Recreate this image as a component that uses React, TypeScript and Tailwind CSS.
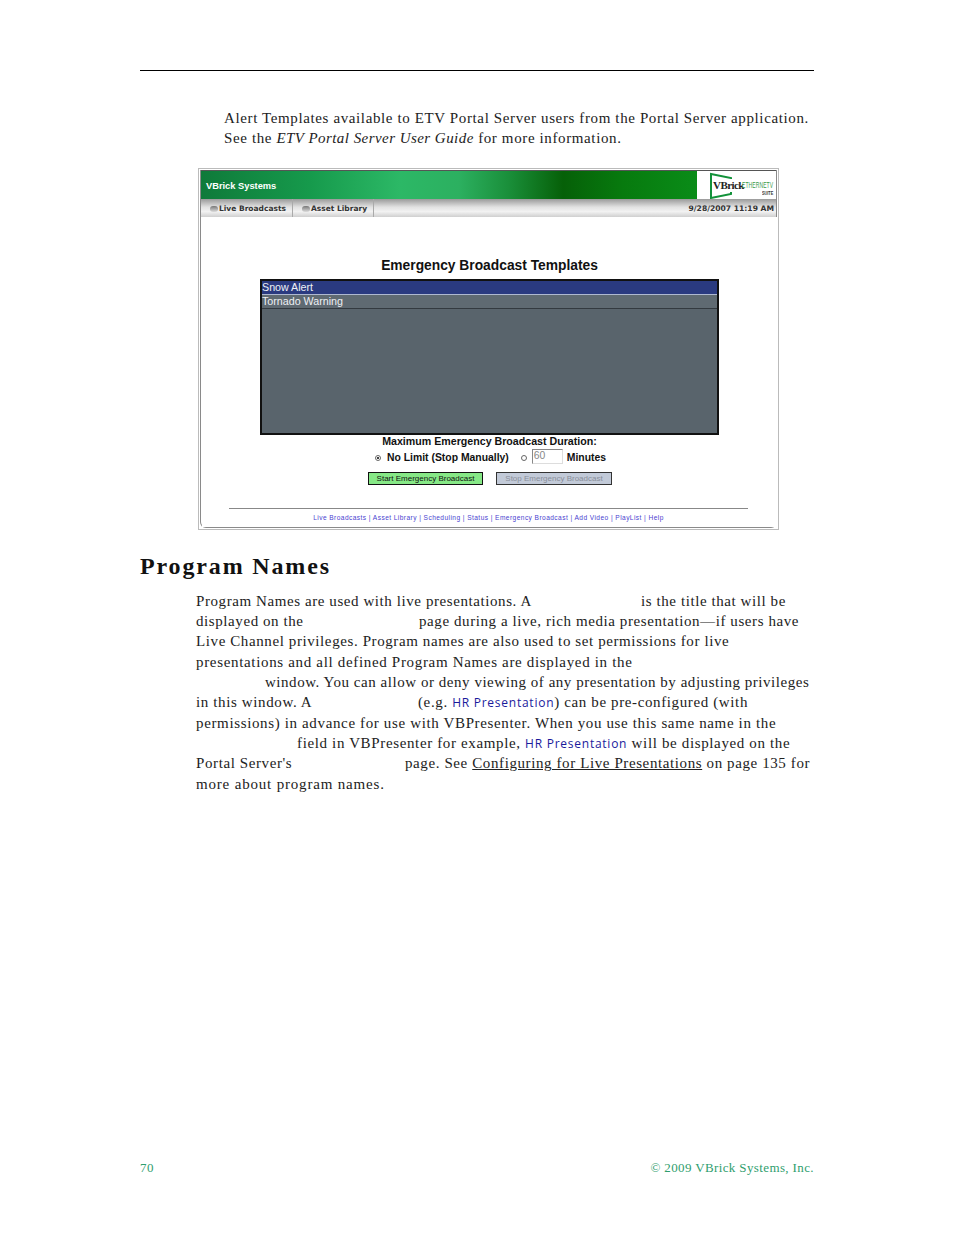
import React from "react";

const L = ({ children, t }: { children: React.ReactNode; t?: string }) => (
  <div className={`h-[20.36px] leading-[20.36px] whitespace-pre ${t ?? ""}`}>{children}</div>
);
const M = ({ children }: { children: React.ReactNode }) => (
  <span className="font-['Open_Sans',sans-serif] text-[12px] text-[#1a1a9c] tracking-[0.75px]">{children}</span>
);

function Logo() {
  return (
    <div className="w-[79px] h-full bg-white relative overflow-hidden">
      <svg className="absolute left-[12px] top-[1px]" width="30" height="28" viewBox="0 0 30 28" fill="none">
        <path d="M22 7 V6 L2 2 V26 L22 22 V20" stroke="#12923a" strokeWidth="2" fill="white" />
      </svg>
      <span className="absolute left-[16px] top-[9px] font-['Liberation_Serif',serif] font-bold text-[11px] leading-[11px] tracking-[-0.55px] text-[#222]">VBrick</span>
      <span className="absolute left-[45px] top-[8px] font-['Liberation_Sans',sans-serif] text-[5px] leading-[6px] tracking-[0.1px] text-[#3a9a4a] scale-y-[1.8] origin-top-left">ETHERNETV</span>
      <span className="absolute left-[65px] top-[19px] font-['Liberation_Sans',sans-serif] font-bold text-[3.8px] leading-[5px] text-[#333] scale-y-[1.6] origin-top-left">SUITE</span>
    </div>
  );
}

function Radio({ on }: { on?: boolean }) {
  return (
    <span className="w-[6px] h-[6px] rounded-full border border-[#666] bg-white flex items-center justify-center shrink-0">
      {on && <span className="w-[2px] h-[2px] rounded-full bg-black" />}
    </span>
  );
}

function Tab({ children, w }: { children: React.ReactNode; w: string }) {
  return (
    <div className={`${w} h-full border-r border-[#aaa] flex items-center pl-[9px] pt-[2px] gap-[1px]`}>
      <span className="w-[8px] h-[6px] rounded-full bg-[linear-gradient(180deg,#777,#ddd)] shrink-0" />
      <span className="font-['DejaVu_Sans',sans-serif] font-bold text-[7.5px] tracking-normal text-[#333] whitespace-nowrap">{children}</span>
    </div>
  );
}

function Shot() {
  const links = ["Live Broadcasts", "Asset Library", "Scheduling", "Status", "Emergency Broadcast", "Add Video", "PlayList", "Help"];
  return (
    <div className="ml-[58px] mt-[19px] w-[581px] h-[362px] border border-[#bbb] p-px font-['Liberation_Sans',sans-serif] tracking-normal">
      <div className="h-full border border-[#8a8a8a] border-t-0 rounded-b-[6px] flex flex-col">
        <div className="h-[29px] flex border-t border-[#555]">
          <div className="flex-1 bg-[linear-gradient(90deg,#0f7a3a_0%,#169a4c_22%,#2cb866_40%,#2cb060_52%,#1a8f3a_62%,#066008_73%,#077a0e_85%,#0a8c18_100%)] text-white text-[9.3px] font-bold pl-[5px] pt-[8px] leading-[14px]">VBrick Systems</div>
          <Logo />
        </div>
        <div className="h-[18px] bg-[linear-gradient(180deg,#9a9a9a_0%,#e2e2e2_45%,#f2f2f2_70%,#cfcfcf_100%)] flex items-center pr-[2px]">
          <Tab w="w-[92px]">Live Broadcasts</Tab>
          <Tab w="w-[81px]">Asset Library</Tab>
          <span className="ml-auto pt-[2px] font-['DejaVu_Sans',sans-serif] font-bold text-[7.6px] text-[#333]">9/28/2007 11:19 AM</span>
        </div>
        <div className="flex-1 flex flex-col items-center bg-white translate-x-[1px]">
          <div className="mt-[41px] h-[16px] leading-[16px] text-[13.8px] font-bold text-[#111]">Emergency Broadcast Templates</div>
          <div className="mt-[5px] w-[459px] h-[156px] border-2 border-[#111] bg-[#59646c] text-[#eef0f4] text-[10.7px]">
            <div className="h-[14px] leading-[13px] bg-[#2a3a80] border-b border-[#aeb8d0]">Snow Alert</div>
            <div className="h-[14px] leading-[13px] bg-[#5f6a72] border-b border-[#333a40]">Tornado Warning</div>
          </div>
          <div className="mt-0 h-[12px] leading-[12px] text-[10.65px] font-bold text-[#111]">Maximum Emergency Broadcast Duration:</div>
          <div className="mt-[2px] h-[18px] w-[459px] pl-[115px] flex items-center text-[10.4px] font-bold text-[#111]">
            <Radio on />
            <span className="ml-[6px]">No Limit (Stop Manually)</span>
            <span className="ml-[12px]"><Radio /></span>
            <span className="ml-[5px] w-[31px] h-[15px] border border-[#ddd] border-t-[#888] border-l-[#888] text-[#888] font-normal pl-[1px] leading-[12px] mb-[2px]">60</span>
            <span className="ml-[4px]">Minutes</span>
          </div>
          <div className="mt-[5px] w-[459px] pl-[108px] flex gap-[13px] text-[8px]">
            <div className="w-[115px] h-[13px] leading-[11px] border border-[#111] bg-[#86e886] text-center text-[#111]">Start Emergency Broadcast</div>
            <div className="w-[116px] h-[13px] leading-[11px] border border-[#333] bg-[#c2cad8] text-center text-[#8a8f9a]">Stop Emergency Broadcast</div>
          </div>
          <div className="mt-[23px] w-[519px] h-px bg-[#888] -translate-x-[1px]" />
          <div className="mt-[5px] h-[8px] leading-[8px] text-[6.6px] text-[#4a3fd0] whitespace-pre tracking-[0.43px] -translate-x-[1px]">{links.join(" | ")}</div>
        </div>
      </div>
    </div>
  );
}

export default function App() {
  return (
    <div className="w-[954px] h-[1235px] bg-white font-['Liberation_Serif',serif] text-[15px] text-[#222] tracking-[0.62px] overflow-hidden flex flex-col px-[140px]">
      <div className="mt-[70px] h-px bg-black" />
      <div className="ml-[84px] mt-[37px]">
        <L>Alert Templates available to ETV Portal Server users from the Portal Server application.</L>
        <L>See the <i className="tracking-[0.45px]">ETV Portal Server User Guide</i> for more information.</L>
      </div>
      <Shot />
      <h1 className="mt-[20px] h-[32px] leading-[32px] text-[24px] font-bold text-[#111] tracking-[1.85px]">Program Names</h1>
      <div className="ml-[56px] mt-[8.9px]">
        <L t="tracking-[0.58px]"><span className="inline-block w-[445px]">Program Names are used with live presentations. A</span>is the title that will be</L>
        <L t="tracking-[0.58px]"><span className="inline-block w-[223px]">displayed on the</span>page during a live, rich media presentation—if users have</L>
        <L t="tracking-[0.6px]">Live Channel privileges. Program names are also used to set permissions for live</L>
        <L t="tracking-[0.67px]">presentations and all defined Program Names are displayed in the</L>
        <L t="tracking-[0.54px]"><span className="inline-block w-[69px]" />window. You can allow or deny viewing of any presentation by adjusting privileges</L>
        <L><span className="inline-block w-[222px]">in this window. A</span>(e.g. <M>HR Presentation</M>) can be pre-configured (with</L>
        <L t="tracking-[0.64px]">permissions) in advance for use with VBPresenter. When you use this same name in the</L>
        <L t="tracking-[0.64px]"><span className="inline-block w-[101px]" />field in VBPresenter for example, <M>HR Presentation</M> will be displayed on the</L>
        <L t="tracking-[0.6px]"><span className="inline-block w-[209px]">Portal Server's</span>page. See <span className="underline">Configuring for Live Presentations</span> on page 135 for</L>
        <L t="tracking-[0.82px]">more about program names.</L>
      </div>
      <div className="mt-auto mb-[58px] flex justify-between text-[13px] leading-[18px] text-[#2f9e6e] tracking-[0.38px]">
        <span>70</span>
        <span>© 2009 VBrick Systems, Inc.</span>
      </div>
    </div>
  );
}
